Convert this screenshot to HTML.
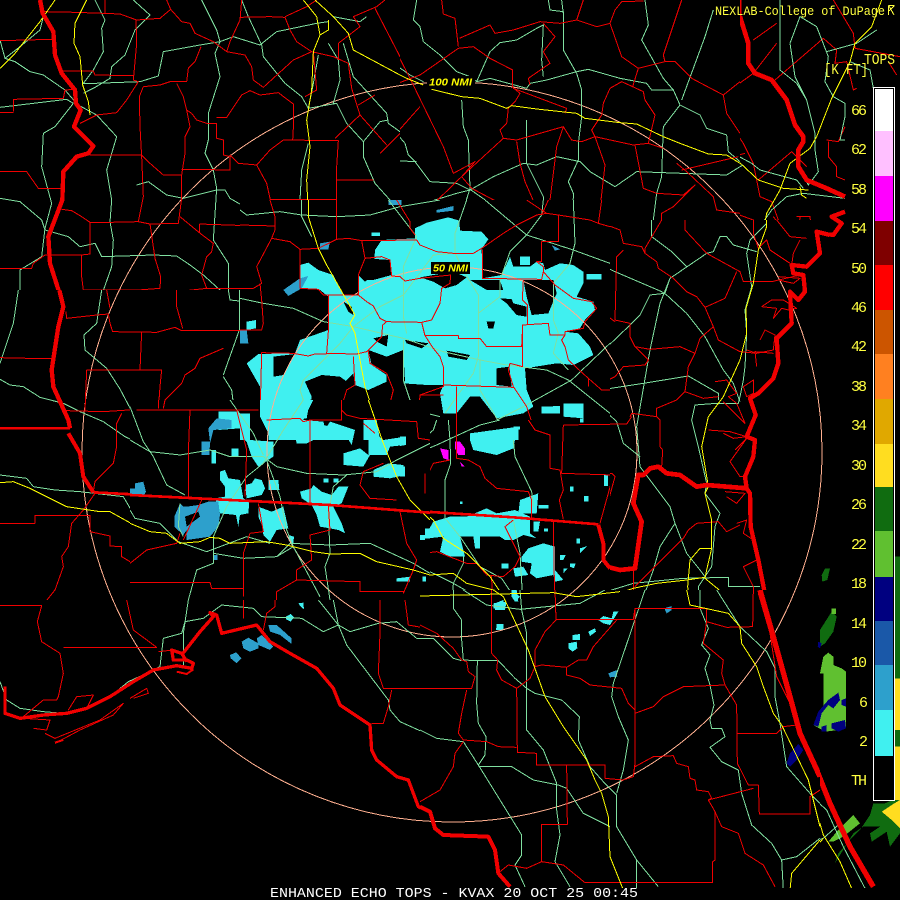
<!DOCTYPE html>
<html>
<head>
<meta charset="utf-8">
<title>Enhanced Echo Tops</title>
<style>
html,body{margin:0;padding:0;background:#000;width:900px;height:900px;overflow:hidden}
svg{display:block}
.z{shape-rendering:crispEdges}
.r,.g,.y,.t{fill:none;stroke-linejoin:round;stroke-width:3}
.r path,.g path,.y path{fill:none}
.r{stroke:#f00000}
.g{stroke:#80e0a0}
.y{stroke:#ffff00}
.t{stroke:#f00000;stroke-width:12}
.c{fill:#40f0f0}.b{fill:#2da0cc}.m{fill:#ff00ff}.k{fill:#000}.n{fill:#000080}.lg{fill:#60c030}.dg{fill:#106c10}.ye{fill:#ffdd20}
text{font-family:"Liberation Mono",monospace}
.l{fill:#ffff40;font-size:15px}
</style>
</head>
<body>
<svg class="z" width="900" height="900" viewBox="0 0 900 900" xmlns="http://www.w3.org/2000/svg">
<defs>
<clipPath id="c7"><rect x="0" y="0" width="240" height="290"/><rect x="240" y="0" width="160" height="200"/></clipPath>
<clipPath id="c8"><rect x="400" y="0" width="340" height="200"/><rect x="610" y="200" width="130" height="20"/></clipPath>
<clipPath id="c1"><rect x="740" y="0" width="160" height="220"/><rect x="830" y="220" width="70" height="80"/></clipPath>
<clipPath id="c2"><rect x="240" y="200" width="370" height="200"/><rect x="430" y="400" width="180" height="20"/></clipPath>
<clipPath id="c10"><rect x="610" y="220" width="220" height="80"/><rect x="610" y="300" width="210" height="290"/></clipPath>
<clipPath id="c3"><rect x="130" y="400" width="300" height="200"/></clipPath>
<clipPath id="c9"><rect x="0" y="290" width="130" height="310"/><rect x="130" y="290" width="110" height="110"/></clipPath>
<clipPath id="c4"><rect x="430" y="420" width="180" height="170"/></clipPath>
<clipPath id="c11"><rect x="420" y="590" width="400" height="300"/></clipPath>
<clipPath id="c6"><rect x="0" y="600" width="420" height="290"/></clipPath>
<clipPath id="c5"><rect x="820" y="540" width="80" height="350"/></clipPath>
</defs>
<rect width="900" height="900" fill="#000"/>

<!-- STORM main (zoom 2 coords) -->
<g transform="translate(240,200) scale(.33333)">
<path class="c" d="M525,85 L560,68 L625,52 L658,62 L660,92 L725,95 L745,118 L725,148 L727,235 L785,225 L810,170 L820,200 L870,200 L890,185 L910,190 L915,210 L960,190 L1000,195 L1030,215 L1030,250 L1010,290 L1060,305 L1065,330 L1035,360 L1020,385 L975,395 L1015,400 L1050,440 L1060,465 L1000,495 L950,490 L855,505 L860,570 L880,620 L850,640 L770,655 L720,590 L690,590 L650,640 L610,640 L600,580 L610,555 L560,555 L490,550 L490,520 L440,520 L440,545 L385,570 L345,555 L340,520 L300,560 L210,600 L200,655 L110,660 L85,700 L60,650 L60,560 L20,490 L55,462 L165,460 L180,420 L265,390 L265,350 L265,290 L240,270 L180,265 L180,195 L205,188 L235,210 L280,225 L310,285 L355,285 L355,225 L375,245 L400,225 L405,150 L425,120 L525,115 Z"/>
<path class="k" d="M375,175 L450,180 L455,225 L400,240 L375,240 L360,225 Z"/>
<path class="k" d="M540,232 L640,215 L680,232 L650,255 L615,265 L580,245 Z"/>
<path class="k" d="M690,240 L780,240 L790,270 L740,270 Z"/>
<path class="k" d="M780,295 L860,300 L860,350 L830,345 L800,310 Z"/>
<path class="k" d="M850,240 L940,240 L950,280 L925,340 L875,345 L860,290 Z"/>
<path class="k" d="M385,450 L440,470 L490,450 L495,545 L440,525 L395,495 Z"/>
<path class="k" d="M195,545 L245,525 L300,530 L335,555 L310,600 L300,660 L205,660 L215,590 Z"/>
<path class="k" d="M100,470 L165,462 L130,525 L100,530 Z"/>
<path class="k" d="M620,452 L690,465 L680,480 L625,470 Z"/>
<path class="k" d="M495,420 L565,430 L545,445 L500,430 Z"/>
<path class="k" d="M770,505 L808,500 L815,560 L770,555 Z"/>
<path class="k" d="M740,365 L765,365 L760,385 L745,385 Z"/>
<path class="k" d="M310,305 L335,320 L340,345 L325,335 Z"/>
<path class="k" d="M400,415 L445,405 L440,440 L410,425 Z"/>
<path class="k" d="M560,600 L580,600 L580,630 L560,630 Z"/>
<path class="c" d="M395,98 L420,98 L420,108 L395,108 Z M840,170 L870,170 L870,195 L840,195 Z M20,365 L48,360 L48,385 L20,390 Z M1040,222 L1085,222 L1085,238 L1040,238 Z M810,285 L860,300 L860,320 L820,310 Z M905,620 L960,618 L960,640 L905,640 Z M970,610 L1030,610 L1030,655 L970,650 Z M1020,655 L1030,655 L1030,668 L1020,668 Z M0,640 L30,640 L30,720 L0,720 Z M85,680 L150,670 L300,680 L330,720 L85,720 Z M370,660 L410,660 L420,720 L370,720 Z M690,700 L835,680 L835,720 L690,720 Z"/>
<path class="b" d="M130,270 L180,235 L205,228 L185,265 L145,288 Z M240,130 L270,125 L265,148 L240,148 Z M445,0 L485,0 L485,15 L445,15 Z M590,30 L640,18 L640,32 L590,38 Z M935,135 L960,148 L945,152 Z M0,390 L20,390 L25,430 L0,430 Z"/>
</g>

<!-- STORM SW (zoom 3 coords) -->
<g transform="translate(130,400) scale(.33333)">
<path class="c" d="M265,35 L325,35 L350,60 L360,120 L430,125 L430,170 L385,200 L365,170 L350,125 L330,110 L330,85 L265,90 L265,50 Z"/>
<path class="b" d="M215,125 L240,125 L235,85 L260,55 L305,60 L305,85 L250,90 L240,130 L238,165 L215,165 Z"/>
<path class="c" d="M245,150 L258,150 L258,190 L245,190 Z M305,145 L325,145 L325,170 L305,170 Z M390,0 L550,0 L530,40 L520,60 L580,65 L590,100 L530,130 L500,130 L490,90 L440,95 L420,65 L390,50 Z M600,65 L675,90 L665,135 L650,110 L590,80 Z M640,160 L690,145 L715,165 L715,110 L735,100 L760,120 L825,110 L825,135 L780,140 L770,165 L720,165 L700,200 L640,195 Z M730,210 L775,190 L820,195 L825,225 L780,235 L730,230 Z M270,215 L285,210 L295,235 L330,240 L340,295 L358,305 L355,340 L330,345 L325,380 L318,345 L270,340 L255,295 L285,290 L285,260 L270,240 Z M345,255 L365,250 L375,235 L395,240 L405,265 L395,285 L350,295 Z M415,240 L445,240 L448,270 L415,270 Z"/>
<path class="b" d="M133,350 L150,310 L160,320 L170,320 L205,315 L235,305 L265,305 L270,345 L265,380 L240,410 L170,420 L170,390 L160,405 L133,380 Z M0,265 L15,265 L15,250 L40,245 L48,275 L40,290 L18,290 L0,280 Z M250,465 L262,465 L262,480 L250,480 Z"/>
<path class="k" d="M165,350 L205,335 L210,350 L170,380 Z"/>
<path class="c" d="M385,320 L425,335 L460,320 L475,385 L440,390 L420,425 L400,405 L398,380 L385,350 Z M475,405 L492,410 L490,430 L475,420 Z M510,275 L545,265 L550,255 L575,275 L605,285 L625,260 L655,260 L635,310 L610,320 L620,340 L635,370 L645,400 L625,390 L600,385 L570,380 L560,345 L545,315 L515,295 Z M800,535 L840,530 L840,545 L800,545 Z M870,405 L885,405 L885,420 L870,420 Z M885,385 L900,385 L900,415 L885,415 Z M580,235 L595,235 L595,248 L580,248 Z M610,235 L625,235 L625,248 L610,248 Z"/>
</g>

<!-- STORM SE (zoom 4 coords) -->
<g transform="translate(400,420) scale(.33333)">
<path class="c" d="M215,40 L250,35 L280,55 L300,40 L335,30 L345,60 L340,85 L290,105 L220,90 L210,60 Z M80,340 L100,305 L150,290 L200,290 L260,265 L290,280 L345,270 L390,290 L390,340 L410,355 L370,345 L340,360 L315,360 L300,350 L240,350 L240,385 L225,385 L220,350 L180,350 L195,410 L150,410 L120,395 L130,350 L85,355 Z M365,410 L385,385 L430,370 L465,380 L465,450 L490,480 L465,485 L460,465 L410,475 L390,460 L395,430 L365,425 Z M340,445 L370,440 L385,465 L345,470 Z M360,240 L415,220 L410,280 L355,280 Z M510,200 L520,200 L520,215 L510,215 Z M552,228 L565,228 L565,245 L552,245 Z M612,165 L624,165 L624,198 L612,198 Z M530,355 L540,355 L540,370 L530,370 Z M540,385 L562,378 L540,400 Z M480,405 L497,405 L490,420 L480,420 Z M510,430 L527,430 L522,445 L510,440 Z M305,430 L325,430 L325,445 L305,445 Z M490,445 L503,445 L490,460 Z M60,348 L72,348 L72,360 L60,360 Z M400,305 L420,305 L415,335 L400,335 Z M432,325 L444,325 L444,335 L432,335 Z M415,255 L445,255 L445,265 L415,265 Z M180,245 L188,245 L188,252 L180,252 Z M0,50 L18,50 L18,75 L0,78 Z M0,140 L15,140 L15,170 L0,170 Z M0,475 L28,475 L28,485 L0,485 Z M68,470 L78,470 L78,485 L68,485 Z M280,550 L320,545 L315,570 L280,565 Z M335,510 L360,530 L345,545 L335,530 Z M290,612 L310,612 L310,630 L290,630 Z M340,20 L360,20 L360,28 L340,28 Z"/>
<path class="m" d="M165,65 L180,65 L195,85 L195,105 L175,105 L165,85 Z M120,85 L145,90 L145,120 L130,115 L125,100 Z M180,125 L195,140 L185,140 Z"/>
</g>

<!-- small echoes lower (zoom 11 coords) -->
<g transform="translate(420,590) scale(.33333)">
<path class="c" d="M225,40 L250,30 L255,60 L225,60 Z M230,103 L250,103 L250,120 L228,120 Z M275,0 L290,0 L295,35 L285,35 Z M535,90 L550,78 L575,85 L580,65 L595,65 L570,105 L550,100 Z M505,125 L525,115 L528,125 L510,138 Z M458,135 L480,132 L480,150 L458,150 Z M445,160 L470,155 L472,175 L458,185 L445,175 Z"/>
<path class="b" d="M565,250 L590,240 L592,260 L570,262 Z M733,55 L755,48 L755,60 L740,70 Z"/>
</g>

<!-- blue echoes gulf (zoom 6 coords) -->
<g transform="translate(0,600) scale(.33333)">
<path class="b" d="M725,125 L745,113 L775,130 L775,145 L750,155 L730,145 Z M770,115 L785,105 L820,140 L810,150 L775,135 Z M805,75 L830,75 L875,115 L875,132 L840,105 L810,95 Z M690,165 L708,157 L725,175 L710,190 L692,175 Z"/>
<path class="c" d="M858,50 L872,42 L882,52 L872,65 L858,58 Z M895,10 L910,8 L912,28 L902,20 Z"/>
</g>

<!-- Right side radar (zoom 5 coords) -->
<g transform="translate(770,540) scale(.33333)">
<path class="dg" d="M165,85 L180,85 L172,120 L157,125 L155,105 Z M185,215 L200,230 L190,275 L165,310 L150,320 L150,270 Z"/>
<path class="lg" d="M185,205 L198,205 L198,222 L185,222 Z M175,338 L190,350 L190,375 L215,385 L228,395 L228,565 L205,570 L165,575 L130,555 L160,500 L160,400 L150,400 L160,350 Z"/>
<path class="n" d="M205,458 L210,480 L190,505 L175,495 L155,520 L145,560 L130,555 L145,515 L175,480 Z M215,480 L228,475 L228,500 L215,495 Z M185,550 L225,540 L228,565 L205,575 L185,565 Z M155,560 L170,555 L170,575 L155,575 Z M145,305 L155,310 L150,325 L143,320 Z M85,612 L100,630 L80,660 L60,680 L50,670 L60,640 Z"/>
<path class="dg" d="M310,790 L345,790 L390,770 L390,880 L360,920 L350,875 L305,905 L300,880 L330,860 L280,860 L250,880 L210,945 L195,970 L205,940 L240,900 L270,870 L300,825 Z"/>
<path class="lg" d="M175,905 L205,870 L250,825 L270,850 L220,890 L190,905 Z"/>
<path class="ye" d="M335,815 L365,795 L390,780 L390,865 L365,840 Z"/>
<rect class="dg" x="372" y="50" width="18" height="365"/>
<rect class="ye" x="372" y="415" width="18" height="155"/>
<rect class="dg" x="372" y="570" width="18" height="50"/>
<rect class="ye" x="372" y="620" width="18" height="160"/>
</g>

<!-- RANGE RINGS -->
<circle cx="452" cy="452" r="370" fill="none" stroke="#ffb090" stroke-width="1"/>
<circle cx="452" cy="452" r="185" fill="none" stroke="#ffb090" stroke-width="1"/>

<!-- LINES zoom 2 -->
<g clip-path="url(#c2)"><g transform="translate(240,200) scale(.33333)">
<g class="g"><path d="M0,30 L20,45 L120,35 L185,45 L290,50 L390,45 L480,20 L600,0 M185,0 L185,50 L215,110 M445,0 L530,110 L490,200 L490,350 L500,400 M680,0 L645,100 L645,160 L675,220 L715,285 L715,470 L700,520 L615,640 M735,0 L860,105 L810,155 L780,240 L780,290 L715,340 M860,105 L1000,150 L1110,190 M860,105 L905,45 L910,0 M1000,0 L1005,130 L990,190 L940,250 L940,360 L955,400 L940,460 L985,510 M0,295 L70,310 L160,325 L250,365 L340,380 L490,415 L610,455 L720,480 L800,495 L920,510 L985,540 L1110,640 M490,285 L420,320 L340,380 L300,430 L190,540 L180,570 L190,600 L115,720 M490,285 L580,165 L640,160 M490,420 L490,540 L520,630 L600,650 M995,540 L850,620 L770,660 L640,720 M995,540 L1110,430 M720,480 L720,570 L770,655 L820,710 M0,620 L30,660 L45,720 M385,620 L405,660"/></g>
<g class="r"><path d="M0,75 L105,78 M90,0 L105,50 L105,90 L95,115 L50,200 L65,250 L40,265 L0,265 M95,115 L150,125 L180,148 L235,145 L290,118 L290,0 M290,118 L325,115 L365,122 L530,120 L540,135 L590,155 L640,160 L700,160 L725,145 L790,100 L830,75 L890,45 L920,40 L955,45 L955,125 L905,125 L905,185 L890,185 L910,200 L910,215 L945,255 L1000,295 L1055,305 L1070,325 L1035,365 L1030,385 L975,395 L975,405 L930,405 L925,370 L848,375 L845,440 L740,440 L720,415 L655,415 L655,407 L555,407 L545,367 L575,360 L600,310 L605,265 L630,250 L632,225 L540,235 L495,243 L480,230 L455,228 L450,180 L425,170 L375,175 L365,122 M180,148 L180,265 L235,268 L250,285 L265,285 L355,285 L380,305 L400,318 L420,355 L440,365 L545,367 M355,285 L355,225 L375,175 M265,285 L265,345 L265,395 L260,460 L350,462 L380,455 L415,420 L425,410 L428,375 L440,365 M65,458 L160,460 L205,468 L225,462 L260,462 M65,458 L60,655 L180,658 L190,665 L305,658 L305,620 L320,570 L345,555 L340,470 M385,455 L390,490 L440,520 L460,570 L450,610 L470,640 L470,660 L370,665 L405,660 M555,407 L580,445 L600,470 L610,500 L610,560 L540,585 L535,650 L520,660 L470,662 M848,375 L848,500 L810,490 L805,510 L820,560 L860,620 L880,680 L925,720 M610,555 L820,562 M650,560 L650,720 M540,585 L610,585 M850,240 L847,300 L862,315 L862,372 M727,148 L727,235 L905,238 L910,215 M1085,0 L1075,70 L1110,80 M920,40 L860,0 M955,45 L1050,60 L1075,70 M975,405 L965,420 L975,440 L985,480 L1045,535 L1085,570 L1110,570 M1045,535 L1045,560 M0,630 L60,632 L60,655 M0,390 L65,390 L70,370 L65,300 L60,250 M970,675 L1110,675 M970,675 L970,720 M470,0 L510,65 L510,85 L525,105 M925,0 L905,45"/></g>
<g class="y"><path d="M205,0 L205,50 L235,145 L260,195 L345,345 L330,370 L345,400 L375,560 L405,650 L415,720"/></g>
</g></g>

<!-- LINES zoom 7 -->
<g clip-path="url(#c7)"><g transform="scale(.33333)">
<g class="g"><path d="M0,322 L200,298 L220,310 M220,310 L165,380 L130,400 L125,500 L155,610 L135,685 L125,770 L60,810 L60,900 M0,595 L60,605 L125,660 L135,690 L205,710 L240,740 L285,730 L305,770 L460,765 L530,768 L570,795 L610,825 L660,870 L720,895 M0,120 L15,175 L45,185 L90,215 L130,225 L195,270 L225,305 M15,175 L60,140 L120,90 L130,50 M225,310 L290,345 L350,410 L320,510 L335,600 L330,665 L340,720 L335,800 L300,900 M285,0 L315,60 L305,85 L310,155 L280,210 L250,250 L285,250 L420,245 L475,228 L490,155 L600,135 L660,125 L700,110 L780,135 L830,95 L950,70 L985,65 M400,0 L450,45 L405,90 L375,165 L335,200 L330,235 L285,262 L250,280 M605,0 L650,90 L660,125 L645,160 L660,230 L625,340 L625,420 L615,460 L640,510 L650,565 L640,720 L685,790 L685,900 M410,555 L445,545 L500,585 L550,595 L650,570 L675,570 L690,595 L725,615 L740,645 L845,635 L905,645 L1010,645 L1080,652 L1200,620 M725,0 L745,50 L785,135 L790,170 L855,250 L905,290 L925,325 L1010,310 L1040,370 L1090,425 L1090,470 L1125,550 L1170,600 M985,130 L1015,180 L1020,240 L1000,310 M905,510 L925,430 M905,510 L900,600 L930,700 L960,750 M955,165 L940,250 L925,325 M1000,50 L1080,65 L1100,50 M1030,130 L1060,230 L1160,340 L1165,370 L1200,395 M1090,425 L1140,365 L1165,360"/></g>
<g class="r"><path d="M0,122 L155,118 M130,35 L225,37 L310,40 L360,42 L410,60 L480,55 L512,28 L545,65 L570,70 L585,100 L640,125 L680,155 L735,165 L755,200 L760,240 L790,262 L880,180 L935,155 L1000,170 L1045,190 L1055,265 L1080,345 L1005,415 M500,0 L512,28 M408,60 L410,130 L400,240 L415,245 L380,300 L350,338 L290,345 L240,370 M165,170 L185,213 L280,213 L285,225 L400,227 M40,335 L40,298 L190,295 L195,270 L225,268 M0,338 L40,338 M315,0 L315,40 M725,0 L720,60 L690,125 L680,155 M720,52 L810,50 L855,52 L870,90 L890,125 L935,155 M855,50 L920,20 L950,0 M430,260 L480,255 L510,245 L560,245 L565,205 L585,185 L603,140 M430,260 L418,290 L420,380 L425,470 L430,590 L415,665 M270,465 L425,465 L450,490 L490,525 L545,525 L545,595 L535,670 L450,672 L415,665 L330,667 L270,667 L245,650 L215,632 L185,628 M270,667 L270,762 L245,765 L135,765 L100,790 L95,805 L0,805 M245,765 L245,830 L250,870 L360,870 L415,870 L480,865 L482,830 L465,775 L450,672 M530,250 L550,290 L560,330 L575,340 L590,360 L620,370 L650,370 L650,415 L670,420 L670,465 L690,470 L690,510 L650,510 M560,330 L570,380 L555,410 L555,460 L545,525 M650,352 L680,352 L725,285 L750,272 L780,285 L835,278 L880,312 L880,385 L878,420 M690,465 L715,490 L770,495 L800,550 L810,595 L825,660 L825,715 L790,760 L770,810 L772,870 L785,900 M770,495 L810,450 L850,420 L1015,422 L1010,500 L1010,720 L1005,745 L900,745 L890,735 L825,715 M810,598 L1010,598 M545,508 L635,508 L650,510 M598,672 L825,680 M540,650 L598,698 L640,730 L635,755 L620,770 L605,825 L620,865 L770,865 M598,672 L598,698 M530,900 L530,875 L620,865 M1010,540 L1120,540 M1010,715 L1090,722 L1200,720 M1085,722 L1090,775 L1075,820 L1075,880 M1125,25 L1200,170 M1015,180 L1015,130 L1080,80 L1060,50 L1130,20 L1155,0 M1080,345 L1160,435 M1140,460 L1200,400 M1125,285 L1075,315 M0,515 L80,515 L115,565 L185,565 M940,155 L950,270 L915,290 M900,745 L900,800 L915,880"/></g>
<g class="y"><path d="M0,205 L45,160 L120,65 L165,0 M260,0 L225,70 L222,130 L240,170 L248,255 L265,305 L270,345 M910,0 L950,50 L960,105 L940,155 L935,270 L920,360 L930,440 L920,540 L925,640 L960,750 L1035,895 M945,0 L1000,50 L1045,100 L1060,150 L1200,225 M985,60 L985,90 L960,105"/></g>
<path class="t" d="M120,0 L128,40 L160,95 L165,165 L185,220 L225,270 L228,310 L242,330 L222,380 L280,438 L265,460 L230,470 L190,515 L187,600 L145,710 L150,790 L185,900" style="stroke-width:13"/>
</g></g>

<!-- LINES zoom 8 -->
<g clip-path="url(#c8)"><g transform="translate(380,0) scale(.33333)">
<g class="g"><path d="M0,150 L40,190 L90,225 L130,245 M110,0 L100,60 L120,80 L130,125 L180,165 L230,215 L270,230 L290,245 L330,155 L360,128 L410,120 L470,85 L490,75 L485,180 L490,230 M505,0 L510,30 L550,35 L550,150 L590,220 L605,270 L605,350 L595,430 L595,480 L565,545 L580,580 L578,720 M545,0 L550,40 M290,245 L330,235 L440,265 L450,250 L500,240 L590,215 L625,208 L720,235 L800,250 L815,270 L880,270 L900,315 L960,345 L980,385 L1040,405 L1045,455 L1080,485 M245,300 L250,380 L265,420 L270,565 L225,710 M0,630 L40,618 L100,620 L230,580 L270,570 L340,530 L430,490 L470,495 L530,470 L600,485 L630,515 L705,560 L770,515 L1040,525 L1080,500 M270,568 L330,610 L350,620 L400,670 L440,715 M0,320 L15,360 L75,430 L85,465 L105,485 L150,545 L230,550 L270,570 M0,480 L110,485 M440,360 L440,490 L490,590 L490,640 L445,690 M900,315 L850,380 L845,530 L830,580 L815,700 L830,720 M785,120 L850,235 L880,270 M795,0 L805,75 L785,120 M1000,30 L975,110 L905,300"/></g>
<g class="r"><path d="M0,60 L90,235 L190,440 L220,520 L285,485 L245,530 L275,565 M0,270 L120,225 L235,145 L280,140 L330,175 L398,210 L398,262 L420,280 L405,305 L385,325 L380,370 L360,390 L370,415 L410,420 L550,380 L575,420 L605,425 L645,410 L760,435 L805,430 L850,445 M185,0 L190,42 L225,55 L235,140 M238,115 L330,75 L345,100 L400,90 L480,65 L540,70 L590,60 L650,80 L690,70 L705,30 L725,5 L790,3 M490,70 L525,110 L490,155 L510,190 L445,235 L450,255 M610,0 L590,60 M690,70 L725,170 L775,205 L855,185 L885,185 L935,235 L1030,285 L1040,340 L1080,400 M775,205 L758,260 L725,245 L690,265 L670,310 L665,345 L635,390 L645,410 L675,495 L655,670 M905,0 L850,165 L855,185 M758,260 L790,275 L795,300 L825,345 L805,430 M550,380 L530,440 L505,640 M765,435 L790,565 L830,580 L910,585 L945,555 L880,620 L845,640 L845,680 L820,710 M400,265 L560,325 L555,340 M1030,285 L1080,245 M905,510 L1075,470 M890,490 L920,515 L1000,590 L1010,630 L1080,640 M120,320 L0,455 L50,500 L30,520 L45,570 L90,670 M0,525 L35,545 M370,415 L250,525 L90,680 M275,565 L360,610 L400,670 L440,690 L480,650 L500,640 L535,645 L620,660 L650,670 L715,690 L730,720 M410,425 L420,490 L435,545 L470,625 L475,650 M535,645 L535,720"/></g>
<g class="y"><path d="M0,195 L80,235 L130,255 M155,268 L245,290 L300,295 L380,325 L395,317 L470,327 L590,340 L615,355 L720,368 L770,372 L850,410 L900,430 L985,462 L1040,465 L1080,490"/></g>
</g></g>

<!-- LINES zoom 9 -->
<g clip-path="url(#c9)"><g transform="translate(0,290) scale(.33333)">
<g class="g"><path d="M55,0 L40,100 L0,220 M305,0 L290,100 L252,135 L255,180 L320,235 L360,297 L430,430 L440,475 L490,545 L505,585 L555,610 L560,625 M0,268 L30,285 L70,290 L120,322 L190,340 L240,365 L310,395 L375,440 L440,470 L500,495 L640,480 L700,500 L800,490 M670,260 L695,300 L700,340 L735,360 L770,450 L800,490 M685,0 L690,30 L785,40 M718,0 L718,120 L670,255 M0,555 L80,565 L100,590 L165,600 L240,605 L370,620 L405,680 L475,705 L530,770 L600,785 L650,795 L730,805 L810,800 M640,775 L640,825 L605,828 L575,880 L560,960 M540,650 L530,690 L550,720"/></g>
<g class="r"><path d="M0,203 L85,205 L160,205 M198,65 L200,85 L290,75 L325,72 L330,100 L338,125 L470,127 L525,112 L545,122 L785,122 M320,0 L330,55 M530,0 L530,50 L548,115 M425,125 L420,240 M260,240 L485,240 L480,290 L475,358 M260,240 L255,362 M200,362 L310,365 L415,358 L715,362 M365,370 L350,400 L350,470 L340,520 L285,575 L280,605 M495,358 L495,330 L545,280 L555,255 L585,235 L600,205 L670,175 M572,362 L565,500 L565,620 M715,362 L718,430 L735,480 L733,640 M285,610 L250,660 L215,700 L205,770 L185,800 L190,830 L165,900 L125,950 L0,945 M0,700 L105,700 L105,677 L270,677 L270,725 L330,738 L330,768 L365,770 L365,800 L390,815 L410,800 L480,775 L540,765"/></g>
<g class="y"><path d="M0,578 L40,575 L90,595 L200,650 L300,665 L330,665 L420,715 L500,730 L545,760 L600,760 L630,745 L680,750 L810,755"/></g>
<path class="t" d="M178,0 L190,50 L175,110 L155,240 L160,290 L205,390 L210,415" style="stroke-width:13"/>
<path class="t" d="M205,430 L240,490 L250,560 L280,607"/>
<path class="t" d="M0,415 L210,415" style="stroke-width:7"/>
<path class="t" d="M280,607 L810,634" style="stroke-width:8"/>
</g></g>

<!-- LINES zoom 3 -->
<g clip-path="url(#c3)"><g transform="translate(130,400) scale(.33333)">
<g class="g"><path d="M0,120 L60,155 L150,165 L240,150 L300,170 L400,170 L440,200 L530,220 L640,225 L740,215 L800,180 L900,130 M0,20 L40,125 L70,170 L110,255 L165,285 M520,0 L460,90 L400,190 L350,230 L290,320 L250,410 M410,180 L450,290 L470,390 L490,440 L570,590 M650,225 L610,260 L595,340 L600,460 L585,500 L600,600 M250,410 L250,490 L200,510 L175,600 M250,460 L340,475 L440,470 L490,440 M440,470 L480,430 L600,435 L720,430 L850,490 L900,520 M300,0 L370,100 L400,165 M0,330 L15,355 L90,370 L145,425 L230,455 L350,410 L420,430 M150,310 L145,380 L160,410"/></g>
<g class="r"><path d="M85,0 L85,25 M105,0 L100,25 M20,30 L385,30 M180,30 L175,160 L175,290 M320,30 L350,150 L345,290 M410,60 L510,55 L520,65 L540,60 L540,310 M540,60 L635,60 L635,0 M635,30 L650,45 L690,55 L860,65 L865,115 L900,120 M700,70 L735,100 M760,190 L700,215 L690,255 L720,295 L800,300 M885,220 L885,280 M810,335 L830,430 L860,480 L850,510 L820,580 M595,315 L600,390 L540,405 L545,480 L500,510 L500,540 M0,490 L50,450 L140,430 L150,400 M340,590 L340,460 L360,400 L400,395 L385,310 M0,547 L240,547 L245,565 L340,565 M440,600 L440,575 L500,540 L690,545 L690,575 L820,575 M160,420 L215,300"/></g>
<g class="y"><path d="M0,370 L60,395 L110,400 L150,430 L210,425 L240,412 L270,415 L300,430 L410,425 L470,435 L550,455 L600,462 L690,460 L740,485 L850,510 L900,525 M715,0 L760,130 L800,230 L840,300 L900,360"/></g>
<path class="t" d="M0,285 L300,300 L600,315 L900,338" style="stroke-width:8"/>
</g></g>

<!-- LINES zoom 4 -->
<g clip-path="url(#c4)"><g transform="translate(400,420) scale(.33333)">
<g class="g"><path d="M145,0 L150,60 L152,130 L135,180 L135,300 M0,120 L110,75 L240,15 L300,0 M340,60 L345,110 L395,215 L400,260 M140,300 L180,350 L240,440 L305,475 L335,520 L365,570 M110,0 L100,30 L0,120 M190,410 L190,430 L160,490 L157,550 L185,620 L190,720 M0,415 L100,460 L160,490 L230,530 L280,560 L330,570 M340,300 L360,400 L370,570 M280,565 L465,565 L560,530 L700,495 L780,488 M660,0 L680,70 L720,120 L770,190 M780,395 L700,660 L680,720"/></g>
<g class="r"><path d="M490,15 L680,12 L695,0 M490,15 L485,160 L640,165 L600,310 M385,0 L405,30 L450,45 L450,145 L480,150 L490,210 L478,240 L490,298 M55,0 L55,55 L90,60 M170,0 L170,115 L205,120 L240,140 L255,175 L290,205 L385,215 L395,240 L395,295 M150,120 L100,130 L75,180 L75,260 M0,285 L5,320 L5,380 L45,410 L70,400 L110,395 L200,430 L230,430 L260,465 L310,470 L345,440 L360,410 L330,350 L315,320 L340,300 M460,305 L465,595 L700,597 M700,480 L700,720 M705,565 L780,565 M275,465 L278,700 L290,720 M400,640 L410,690 L450,625 L520,590 M650,600 L570,700 M0,460 L10,515 L0,520 M10,515 L20,600 L100,625 L130,650 M780,430 L700,500"/></g>
<g class="y"><path d="M0,195 L40,250 L100,300 L130,355 L200,400 L270,470 L300,515 L340,590 L400,720 M0,440 L50,455 L90,465 L160,460 L200,490 L300,515 L325,530 L400,528 L470,517 L540,520 L565,535 L630,515 L700,505 L780,490"/></g>
<path class="t" d="M0,270 L340,292 L595,313" style="stroke-width:8"/>
<path class="t" d="M595,315 L610,370 L610,420 L630,445"/>
</g></g>

<!-- LINES zoom 10 -->
<g clip-path="url(#c10)"><g transform="translate(590,220) scale(.33333)">
<g class="g"><path d="M0,120 L75,155 L215,215 L230,225 L290,280 L345,350 L400,450 L430,490 L450,545 M185,0 L185,50 L245,95 L290,140 M350,100 L240,175 L225,220 L180,225 L150,285 L120,315 L0,430 M240,175 L210,250 L180,390 L140,620 L150,740 L240,860 L255,910 L290,1000 L330,1050 L345,1070 M530,10 L480,60 L470,100 L485,200 L465,270 L470,340 L465,440 L460,480 L450,530 L445,550 L380,550 L315,555 L305,600 L325,680 L350,790 L345,820 L390,880 L375,920 L365,1040 L345,1070 M350,100 L370,95 L390,50 L410,50 L430,75 L500,95 M0,500 L30,510 L160,490 L295,468 L385,520 L385,540 M0,530 L80,605 L100,670 L150,710 M0,1130 L130,1090 L280,1075 L415,1072 L415,1100 L510,1100 M255,910 L210,980 L190,1050 L135,1200 M345,1070 L325,1100 L335,1200"/></g>
<g class="r"><path d="M10,0 L90,30 L100,70 L155,80 L165,100 L200,125 L205,145 L250,175 L290,215 L320,230 L345,262 L370,320 L385,360 L450,395 L500,400 L520,395 M285,0 L285,30 L350,100 L450,155 L460,185 L545,185 L630,165 M440,155 L405,235 L345,262 M215,0 L165,85 L165,100 M490,0 L490,40 L505,85 L530,60 L540,90 L600,130 M560,0 L600,50 L650,55 M630,60 L610,100 L605,135 M100,90 L80,110 L75,300 L120,310 L120,350 L135,380 L175,420 L165,435 L100,440 L75,470 L45,485 L0,465 M0,240 L20,265 L75,305 M135,380 L180,388 L270,380 L315,400 L330,355 L370,320 M315,400 L295,440 L285,515 L340,535 L385,530 M285,515 L260,540 L200,565 L200,590 L125,580 L120,590 M200,590 L210,600 L210,680 L218,690 L215,740 M125,590 L110,612 L0,612 M35,510 L35,560 L0,505 M0,760 L65,760 L75,770 L35,915 M130,1050 L130,1200 L0,1198 M135,1165 L350,1165 L345,1200 M135,1100 L280,955 L295,930 L320,910 L385,905 L410,935 L450,915 M515,260 L545,240 L580,240 L620,265 L595,270 L575,265 L550,295 L560,265 L515,260 M510,360 L525,330 L555,345 L550,390 L500,400 L470,390 M500,440 L495,395 L550,400 M375,485 L410,480 L440,520 L415,530 L440,550 L465,610 L400,545 M355,630 L420,635 L470,650 L430,655 L400,640 M435,690 L470,655 L420,725 L450,770 L465,770 M405,815 L465,820 L440,850 L410,830 M460,500 L490,480 L490,520 L470,530 L460,500 M440,910 L470,900 L460,940 L490,960 L500,1020 L460,1040 L490,1100 L490,1200 L525,1200 L510,1120 M565,170 L630,175 L610,190 L565,180"/></g>
<g class="y"><path d="M530,0 L530,20 L505,90 L490,190 L468,265 L470,340 L450,420 L400,530 L355,590 L335,680 L355,800 L345,820 L365,900 L365,985 L330,985 L300,1020 L293,1100 L300,1150 L325,1165 L360,1165 L410,1170 L420,1200 M365,985 L350,1050 L345,1075 L400,1120 L415,1180 L440,1200 M0,1130 L100,1115 L130,1105 L200,1090 L290,1080 L345,1072"/></g>
<path class="t" d="M720,45 L680,35 L690,100 L650,140 L605,135 L610,160 L640,165 L645,215 L625,240 L600,215 L605,310 L560,355 L565,430 L550,475 L505,520 L480,535 L497,585 L470,650 L495,660 L490,710 L465,770 L470,805 L480,820 L482,920 L505,1020 L540,1200" style="stroke-width:13"/>
<path class="t" d="M470,805 L350,795 L320,800 L270,765 L230,760 L205,740 L180,745 L160,765 L145,765 L130,850 L155,905 L135,1045 L90,1050 L50,1040 L40,960 L25,915 L0,910" style="stroke-width:14"/>
</g></g>

<!-- LINES zoom 1 (NE coast) -->
<g clip-path="url(#c1)"><g transform="translate(700,0) scale(.33333)">
<g class="r"><path d="M0,255 L70,285 L75,350 L130,430 L160,490 L180,590 L215,605 L235,660 L290,680 L340,695 M0,495 L135,460 M70,285 L160,220 L230,130 M160,120 L230,70 M225,240 L370,115 L410,150 L405,190 L440,185 L460,270 L470,265 M175,540 L275,455 L320,500 M380,420 L415,425 L435,380 M385,425 L385,470 L410,500 L410,530 L435,540 M0,560 L40,600 L50,620 L160,660 L170,730 L200,760 L275,795 M0,740 L30,770 L110,810 L130,860 L240,850 L275,830 M110,810 L60,900 M400,0 L460,100 L465,145 L600,170 M565,185 L590,225 M220,650 L250,690 L340,700 M290,650 L330,650 L335,695 L295,695 M300,650 L290,760 L320,785 M210,745 L240,770 L270,780 M240,830 L300,825"/></g>
<g class="g"><path d="M0,350 L15,385 L75,400 L80,450 L155,490 L180,510 L290,540 L310,565 M0,525 L70,525 L130,495 M0,775 L40,760 L70,710 L135,750 L150,830 L150,900 M240,0 L240,210 L290,250 L320,300 L345,400 L345,450 L355,515 L325,555 L300,505 M270,130 L300,50 L350,80 L385,170 L375,245 L400,290 L435,310 L435,350 L420,420 L435,420 M380,155 L470,130 L530,90 M450,185 L510,210 L520,265 M260,590 L310,580 L435,595 M260,590 L215,630 L180,680 L140,745 M5,120 L30,60 L60,0 M270,130 L285,230 L320,300"/></g>
<g class="y"><path d="M0,457 L50,460 L100,470 L175,540 L250,565 L325,570 M545,0 L515,80 L465,130 L450,185 L395,295 L350,410 L330,445 L270,490 L240,570 L200,640 L190,690 L170,770 L150,900 M300,560 L305,585 L320,595"/></g>
<path class="t" d="M120,50 L145,130 L145,190 L165,220 L215,240 L260,300 L285,375 L310,410 L310,425 L295,450 L295,500 L320,540 L380,565 L435,590" style="stroke-width:14"/>
<path class="t" d="M435,635 L395,650 L425,670 L400,705 L340,695 L345,725 L360,750 L355,775 L320,805 L275,795 L280,820 L310,830 L315,870 L300,900" style="stroke-width:13"/>
<path class="t" d="M120,0 L120,50" style="stroke-width:10"/>
</g></g>

<!-- LINES zoom 11 -->
<g clip-path="url(#c11)"><g transform="translate(420,590) scale(.33333)">
<g class="g"><path d="M100,0 L100,55 L125,90 L125,150 L130,210 L170,212 L235,212 L285,265 L320,295 L345,310 L425,330 L478,380 L475,450 L510,530 L550,575 L590,615 L590,710 L650,810 L650,900 M130,0 L200,45 L300,58 L480,40 L555,0 M300,0 L305,60 L320,130 L320,420 L370,480 L410,580 L410,660 L420,735 L405,815 L450,890 M675,0 L580,280 L575,320 L595,380 L625,450 L610,540 L590,610 M0,145 L40,145 L100,205 L125,212 M172,212 L170,340 L175,400 L198,440 L195,495 L175,525 M0,420 L50,445 L130,455 L175,525 L305,735 L305,795 L285,825 L315,890 M175,530 L275,530 L340,570 L415,585 L440,595 L490,670 L570,710 M650,810 L715,890 M840,0 L840,55 L865,115 L845,165 L870,195 L855,235 L870,285 L882,345 L870,390 L875,415 L905,415 L915,440 L870,472 L905,515 L955,540 L965,610 L995,705 L1055,760 L1085,810 L1090,900 M1085,810 L1130,800 L1200,745 M890,0 L960,110 L1040,185 L1065,235 L1065,320 L1080,400 L1100,530 L1170,610 L1200,640"/></g>
<g class="r"><path d="M215,0 L215,190 L233,210 L230,240 L245,270 L290,295 L330,265 L345,230 L345,180 L375,125 L410,88 L640,88 L645,55 L860,55 L860,95 L850,160 L910,210 L905,250 L915,285 L790,290 L730,320 L700,350 L645,370 M405,0 L408,88 M645,55 L645,520 L640,560 L610,570 L555,565 L555,525 L350,525 L350,490 L292,487 L290,295 M590,90 L520,170 L500,210 L475,210 L440,232 L365,225 L345,230 M440,232 L440,255 L480,265 L510,285 L605,295 L625,340 L645,360 M0,105 L50,130 L100,175 L125,210 L140,215 L145,245 L165,260 L155,295 L0,295 M140,300 L125,370 L115,430 L130,450 L200,455 L235,470 L290,472 M130,455 L105,490 L100,530 L60,600 L0,635 M915,285 L950,345 L952,520 L985,585 L1015,585 L1018,672 L1170,672 L1170,620 L1200,600 M950,430 L1070,430 L1090,410 L1130,405 M645,530 L700,500 L760,497 L770,520 L805,530 L810,565 L825,570 L830,600 L865,605 L875,625 L865,630 L1000,595 M865,630 L885,665 L885,810 L878,815 L878,878 L495,878 M885,665 L905,710 L955,730 L975,790 L1030,825 L1065,890 M440,525 L442,703 L365,703 L365,815 L430,825 L495,878 M365,815 L320,835 L265,825 L240,845 M1000,0 L998,110 L920,112 L860,95 M1015,10 L1050,130 L1070,260 L1110,340"/></g>
<g class="y"><path d="M220,0 L250,20 L325,180 L375,320 L430,410 L500,510 L525,570 L545,610 L565,680 L570,800 L610,900 M800,0 L810,45 L925,70 L960,110 L965,160 L1010,230 L1030,290 L1060,370 L1085,405 L1165,570 L1200,710 M1200,750 L1115,850 L1110,900 M0,18 L400,8 L470,20 L600,5"/></g>
<path class="t" d="M0,650 L30,665 L45,715 L70,735 L205,740 L225,780 L235,850 L270,890"/>
<path class="t" d="M1020,0 L1060,140 L1110,320 L1140,430 L1200,560" style="stroke-width:16"/>
</g></g>

<!-- LINES zoom 5 -->
<g clip-path="url(#c5)"><g transform="translate(770,540) scale(.33333)">
<g class="g"><path d="M125,770 L170,810 L220,920 L285,1045 M35,960 L80,935 L130,905 L160,895 L205,855"/></g>
<g class="y"><path d="M110,690 L135,800 L160,885 L210,965 L245,1045 M160,895 L70,995"/></g>
<path class="t" d="M0,235 L30,370 L70,510 L120,640 L180,790 L240,920 L310,1040" style="stroke-width:16"/>
</g></g>

<!-- Gulf coast zoom 6 -->
<g clip-path="url(#c6)"><g transform="translate(0,600) scale(.33333)">
<g class="g"><path d="M0,245 L20,300 L60,325 L130,335 L190,340 L260,325 L330,290 L385,245 L450,215 L480,200 L490,115 L545,100 L555,65 L610,55 L665,15 L760,25 L785,50 L905,55 L970,95 L1015,75 L1050,95 L1135,70 L1190,65 L1250,115 L1305,120 L1350,155 M565,0 L550,100 L550,205 M1000,0 L1015,75 L1040,135 L1165,300 L1170,330 L1200,365 L1300,410 L1350,415 M955,0 L1015,75"/></g>
<g class="r"><path d="M0,17 L125,17 L112,65 L125,125 L180,160 L190,220 L175,290 L170,300 L130,300 L70,350 M190,142 L470,142 L400,90 L380,0 M475,155 L520,150 M730,0 L730,55 M825,0 L825,20 L800,40 L790,90 M135,400 L165,415 L300,360 L370,310 L340,345 L240,390 L165,430 M390,295 L440,265 L445,280 L400,295 M205,330 L230,290 L280,285 L260,325 M70,355 L150,360 L140,390 L100,385 M1140,0 L1140,100 L1135,220 L1150,265 L1350,265 M1175,270 L1165,320 L1150,370 L1115,370 M1215,0 L1225,75 L1280,85 L1350,135 M1260,610 L1300,590 L1350,520"/></g>
<path class="t" d="M15,260 L15,340 L60,355 L130,345 L200,340 L260,325 L330,290 L400,245 L460,210 L530,197 L575,205 L580,190 L560,180 L520,180 L515,150 L545,160 L560,185" style="stroke-width:10"/>
<path class="t" d="M545,165 L600,95 L640,50 L630,38 L650,45 L665,100 L770,75 L810,125 L870,160 L950,205 L1000,265 L1020,315 L1110,375 L1115,450 L1130,480 L1190,530 L1225,540 L1255,620 L1300,645" style="stroke-width:10"/>
<path class="t" d="M530,215 L560,222 L580,208 M165,428 L190,420" style="stroke-width:6"/>
</g></g>

<!-- Label knockouts -->
<rect x="427" y="76" width="48" height="12" fill="#000"/>
<rect x="431" y="262" width="39" height="12" fill="#000"/>
<text x="429" y="85.500" style="font-family:'Liberation Sans',sans-serif;font-style:italic;font-weight:bold;font-size:10px" fill="#ffff00" textLength="43" lengthAdjust="spacingAndGlyphs">100 NMI</text>
<text x="433" y="271.500" style="font-family:'Liberation Sans',sans-serif;font-style:italic;font-weight:bold;font-size:10px" fill="#ffff00" textLength="35" lengthAdjust="spacingAndGlyphs">50 NMI</text>

<!-- Bottom strip -->
<rect x="0" y="888" width="900" height="12" fill="#000"/>

<!-- Colour bar -->
<rect x="873" y="87" width="22" height="714" fill="#000"/>
<rect x="873.500" y="87.500" width="21" height="713" fill="none" stroke="#fff"/>
<rect x="875" y="89" width="18" height="42" fill="#ffffff"/>
<rect x="875" y="131" width="18" height="45" fill="#ffc0ff"/>
<rect x="875" y="176" width="18" height="45" fill="#ff00ff"/>
<rect x="875" y="221" width="18" height="44" fill="#7f0000"/>
<rect x="875" y="265" width="18" height="45" fill="#ff0000"/>
<rect x="875" y="310" width="18" height="44" fill="#cc5500"/>
<rect x="875" y="354" width="18" height="45" fill="#ff8020"/>
<rect x="875" y="399" width="18" height="45" fill="#e0a800"/>
<rect x="875" y="444" width="18" height="43" fill="#ffdd20"/>
<rect x="875" y="487" width="18" height="44" fill="#106c10"/>
<rect x="875" y="531" width="18" height="46" fill="#60c030"/>
<rect x="875" y="577" width="18" height="44" fill="#000080"/>
<rect x="875" y="621" width="18" height="44" fill="#1a58a8"/>
<rect x="875" y="665" width="18" height="45" fill="#2da0cc"/>
<rect x="875" y="710" width="18" height="46" fill="#40f0f0"/>

<!-- Text -->
<text x="715" y="15" fill="#ffff40" style="font-size:13px" textLength="170" lengthAdjust="spacingAndGlyphs">NEXLAB-College of DuPage</text>
<path d="M888.500,5.500 H894.500 M888.500,5.500 V15 M889,6 L894,15 M889,11 L894,6" stroke="#ffff40" fill="none"/>
<text x="864" y="64" class="l" textLength="31" lengthAdjust="spacingAndGlyphs">TOPS</text>
<text x="824" y="74" class="l" textLength="44" lengthAdjust="spacingAndGlyphs">[K FT]</text>
<text x="851" y="115" class="l" textLength="16">66</text>
<text x="851" y="154" class="l" textLength="16">62</text>
<text x="851" y="194" class="l" textLength="16">58</text>
<text x="851" y="233" class="l" textLength="16">54</text>
<text x="851" y="273" class="l" textLength="16">50</text>
<text x="851" y="312" class="l" textLength="16">46</text>
<text x="851" y="351" class="l" textLength="16">42</text>
<text x="851" y="391" class="l" textLength="16">38</text>
<text x="851" y="430" class="l" textLength="16">34</text>
<text x="851" y="470" class="l" textLength="16">30</text>
<text x="851" y="509" class="l" textLength="16">26</text>
<text x="851" y="549" class="l" textLength="16">22</text>
<text x="851" y="588" class="l" textLength="16">18</text>
<text x="851" y="628" class="l" textLength="16">14</text>
<text x="851" y="667" class="l" textLength="16">10</text>
<text x="859" y="707" class="l">6</text>
<text x="859" y="746" class="l">2</text>
<text x="851" y="785" class="l" textLength="16">TH</text>
<text x="270" y="897" fill="#ffffff" style="font-size:14px" textLength="368" lengthAdjust="spacingAndGlyphs">ENHANCED ECHO TOPS - KVAX 20 OCT 25 00:45</text>
</svg>
</body>
</html>
